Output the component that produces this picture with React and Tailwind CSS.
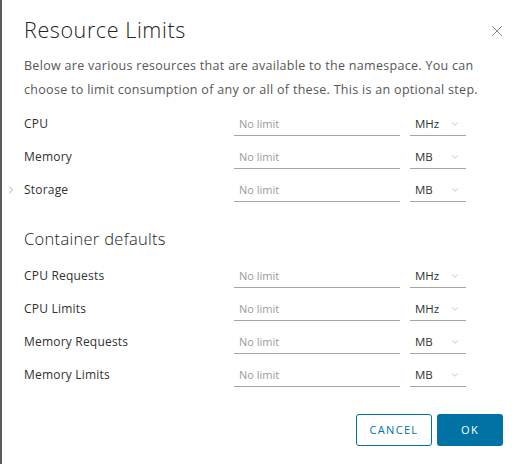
import { ChevronDown, ChevronRight, X } from "lucide-react";

const resources = [
  { label: "CPU", unit: "MHz" },
  { label: "Memory", unit: "MB" },
  { label: "Storage", unit: "MB", expandable: true },
];

const defaults = [
  { label: "CPU Requests", unit: "MHz" },
  { label: "CPU Limits", unit: "MHz" },
  { label: "Memory Requests", unit: "MB" },
  { label: "Memory Limits", unit: "MB" },
];

function LimitRow({ label, unit, expandable }) {
  return (
    <div className="relative flex h-[33px] items-start">
      {expandable && (
        <ChevronRight
          className="absolute left-[-19px] top-[6px] h-3 w-3 text-[#8c8c8c]"
          strokeWidth={1.5}
        />
      )}
      <label className="flex h-6 w-[210px] items-center text-[12px] tracking-[0.2px] text-[#313131]">
        {label}
      </label>
      <input
        placeholder="No limit"
        className="h-6 w-[166px] border-b border-[#a6a6a6] px-[5px] text-[11px] text-[#313131] outline-none placeholder:text-[#9a9a9a]"
      />
      <div className="ml-[10px] flex h-6 w-[56px] items-center justify-between border-b border-[#a6a6a6] pl-[5px] pr-[6px]">
        <span className="text-[11.5px] text-[#313131]">{unit}</span>
        <ChevronDown className="h-[10px] w-[10px] text-[#a0a0a0]" strokeWidth={1.5} />
      </div>
    </div>
  );
}

export default function App() {
  return (
    <div
      className="relative h-[464px] w-[522px] overflow-hidden border-l-2 border-[#5c5c5c] bg-white"
      style={{ fontFamily: '"Open Sans", sans-serif' }}
    >
      <div className="flex items-start justify-between pl-[22px] pr-[16px] pt-[15px]">
        <h1 className="text-[21.5px] font-light leading-[30px] tracking-[0.6px] text-[#222]">
          Resource Limits
        </h1>
        <button className="mt-[7px] text-[#7a7a7a]">
          <X className="h-[18px] w-[18px]" strokeWidth={1.2} />
        </button>
      </div>

      <p className="mt-[9px] pl-[22px] pr-[20px] text-[12.5px] leading-[24px] tracking-[0.3px] text-[#565656]">
        Below are various resources that are available to the namespace. You can
        choose to limit consumption of any or all of these. This is an optional step.
      </p>

      <div className="mt-[10px] pl-[22px]">
        {resources.map((r) => (
          <LimitRow key={r.label} {...r} />
        ))}
      </div>

      <h2 className="mt-[16px] pl-[22px] text-[16.5px] font-light leading-[24px] tracking-[0.3px] text-[#222]">
        Container defaults
      </h2>

      <div className="mt-[13px] pl-[22px]">
        {defaults.map((r) => (
          <LimitRow key={r.label} {...r} />
        ))}
      </div>

      <div className="mt-[18px] flex justify-end gap-[5px] pr-[19px]">
        <button className="h-8 w-[76px] rounded-[3px] border border-[#0072a3] text-[11px] tracking-[0.12em] text-[#0072a3]">
          CANCEL
        </button>
        <button className="h-8 w-[66px] rounded-[3px] bg-[#0072a3] text-[11px] tracking-[0.12em] text-white">
          OK
        </button>
      </div>
    </div>
  );
}
